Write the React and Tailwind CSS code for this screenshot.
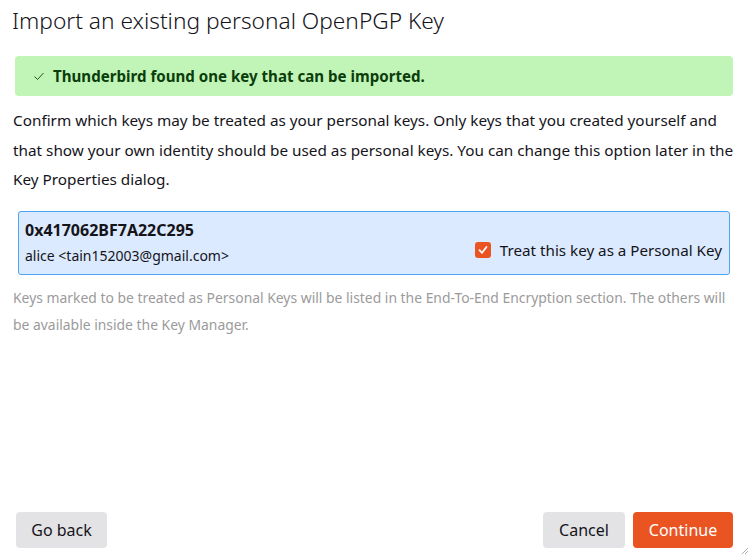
import React, { useState } from 'react';

const font = { fontFamily: '"Noto Sans", "Open Sans", sans-serif' };

const App = () => {
  const [personal, setPersonal] = useState(true);

  return (
    <div className="w-[750px] h-[556px] bg-white text-[#15141a] flex flex-col relative overflow-hidden" style={font}>
      <h1 className="pl-3 pt-[5px] text-[22.7px] font-light leading-[32px]">
        Import an existing personal OpenPGP Key
      </h1>

      <div className="mt-[19px] ml-[15px] mr-[17px] h-[40px] rounded-[4px] bg-[#c1f4b7] flex items-center pl-[18px]">
        <svg width="12" height="12" viewBox="0 0 12 12" className="text-[#1c5b1c]">
          <path d="M1.5 6.5 L4.5 9.5 L10.5 3" fill="none" stroke="currentColor" strokeWidth="1" />
        </svg>
        <span className="ml-[8px] text-[15.1px] font-bold text-[#0b3d0b]">
          Thunderbird found one key that can be imported.
        </span>
      </div>

      <p className="mt-[10px] pl-[13px] pr-[4px] text-[15.3px] leading-[29.5px]">
        Confirm which keys may be treated as your personal keys. Only keys that you created yourself and that show your own identity should be used as personal keys. You can change this option later in the Key Properties dialog.
      </p>

      <div className="mt-[16px] ml-[18px] mr-[20px] h-[64px] rounded-[3px] border border-[#4ea4f4] bg-[#dbeafe] flex items-center justify-between pl-[6px] pr-[7px]">
        <div className="flex flex-col">
          <span className="text-[16px] font-bold leading-[20px]">0x417062BF7A22C295</span>
          <span className="mt-[7px] text-[14px] leading-[18px]">alice &lt;tain152003@gmail.com&gt;</span>
        </div>
        <label className="flex items-center gap-[9px] mt-[15px] cursor-pointer">
          <span
            onClick={() => setPersonal(!personal)}
            className={`w-[16px] h-[16px] rounded-[3px] flex items-center justify-center ${personal ? 'bg-[#e95420]' : 'bg-white border border-gray-400'}`}
          >
            {personal && (
              <svg width="12" height="12" viewBox="0 0 12 12">
                <path d="M2.5 6.2 L5 8.8 L9.5 3" fill="none" stroke="white" strokeWidth="1.8" strokeLinecap="round" strokeLinejoin="round" />
              </svg>
            )}
          </span>
          <span className="text-[15.2px] leading-[20px]">Treat this key as a Personal Key</span>
        </label>
      </div>

      <p className="mt-[9px] pl-[13px] pr-[10px] text-[13.9px] leading-[27px] text-[#9b9b9b]">
        Keys marked to be treated as Personal Keys will be listed in the End-To-End Encryption section. The others will be available inside the Key Manager.
      </p>

      <div className="mt-auto mb-[8px] pl-4 pr-[17px] flex items-center">
        <button className="h-[36px] w-[91px] rounded-[4px] bg-[#e3e3e5] text-[16px]">Go back</button>
        <div className="ml-auto flex gap-2">
          <button className="h-[36px] w-[82px] rounded-[4px] bg-[#e3e3e5] text-[16px]">Cancel</button>
          <button className="h-[36px] w-[100px] rounded-[4px] bg-[#e95420] text-white text-[16px]">Continue</button>
        </div>
      </div>

      <svg width="8" height="8" viewBox="0 0 8 8" className="absolute right-[1px] bottom-[1px]">
        <path d="M7 1 L1 7 M7 4 L4 7" stroke="#b0b0b0" strokeWidth="1" />
      </svg>
    </div>
  );
};

export default App;
